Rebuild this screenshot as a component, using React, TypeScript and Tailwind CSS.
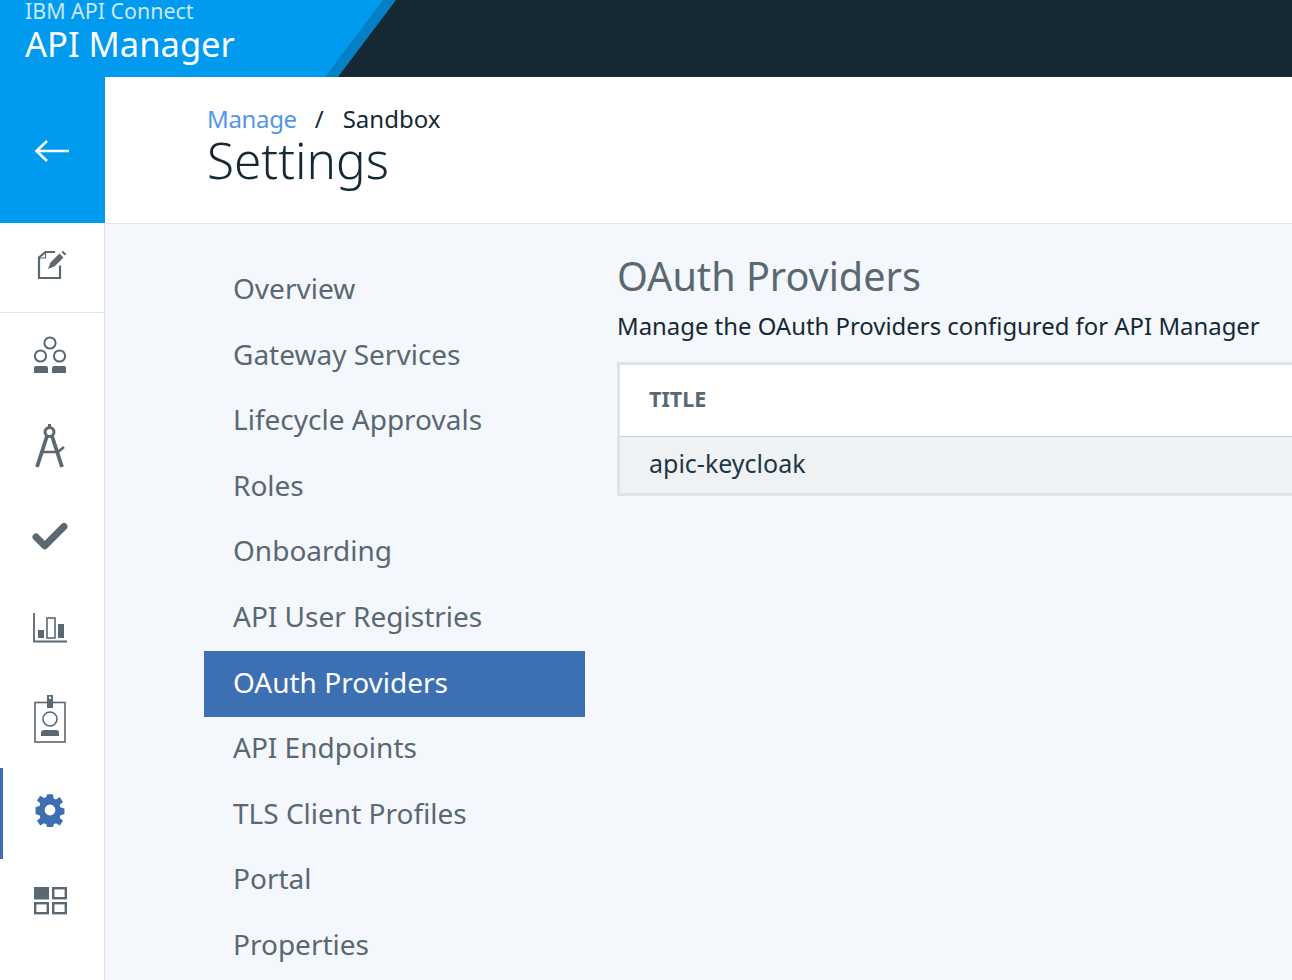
import { Check } from "lucide-react";

const NAV = [
  "Overview",
  "Gateway Services",
  "Lifecycle Approvals",
  "Roles",
  "Onboarding",
  "API User Registries",
  "OAuth Providers",
  "API Endpoints",
  "TLS Client Profiles",
  "Portal",
  "Properties",
];

function BackArrow() {
  return (
    <svg width="36" height="24" viewBox="0 0 36 24" fill="none">
      <path d="M35 12H3M13 2L2.5 12 13 22" stroke="#ffffff" strokeWidth="2.6" />
    </svg>
  );
}

function DraftIcon() {
  return (
    <svg width="32" height="32" viewBox="0 0 32 32" fill="none">
      <path d="M24 16.5V29H3V8.5L9.5 3H19" stroke="#5a6872" strokeWidth="2.2" />
      <path d="M9.5 3v6H3.5" stroke="#5a6872" strokeWidth="1.2" />
      <path d="M12 20l2.5-6.5 9-9 4 4-9 9z" fill="#5a6872" />
      <path d="M25.5 3.2l1.4-1.4 3.4 3.2-1.4 1.5z" fill="#5a6872" />
    </svg>
  );
}

function CommunityIcon() {
  return (
    <svg width="34" height="38" viewBox="0 0 34 38" fill="none">
      <circle cx="17" cy="7" r="5.6" stroke="#5a6872" strokeWidth="2" />
      <circle cx="7.5" cy="20" r="5.6" stroke="#5a6872" strokeWidth="2" />
      <circle cx="26.5" cy="20" r="5.6" stroke="#5a6872" strokeWidth="2" />
      <path d="M1 37v-5q0-2 2-2h10q2 0 2 2v5zM19 37v-5q0-2 2-2h10q2 0 2 2v5z" fill="#5a6872" />
    </svg>
  );
}

function CompassIcon() {
  return (
    <svg width="32" height="46" viewBox="0 0 32 46" fill="none">
      <path d="M14 1h3v4h-3z" fill="#5a6872" />
      <circle cx="15.5" cy="9" r="4.5" stroke="#5a6872" strokeWidth="3" />
      <path d="M13 13L3 44M18 13l10 31" stroke="#5a6872" strokeWidth="3.8" />
      <path d="M7 29h17l6-5" stroke="#5a6872" strokeWidth="2.6" />
    </svg>
  );
}

function ChartIcon() {
  return (
    <svg width="34" height="30" viewBox="0 0 34 30" fill="none">
      <path d="M1 0v28.5h33" stroke="#5a6872" strokeWidth="1.8" />
      <rect x="5" y="17" width="6" height="8" fill="#5a6872" />
      <rect x="14" y="5" width="8" height="20" stroke="#5a6872" strokeWidth="1.6" />
      <rect x="25" y="11" width="6" height="14" fill="#5a6872" />
    </svg>
  );
}

function BadgeIcon() {
  return (
    <svg width="32" height="48" viewBox="0 0 32 48" fill="none">
      <rect x="1" y="7.5" width="30" height="39.5" stroke="#5a6872" strokeWidth="1.6" />
      <rect x="13" y="0" width="6" height="13" fill="#5a6872" />
      <circle cx="16" cy="2.8" r="1.2" fill="#ffffff" />
      <circle cx="16" cy="24" r="7" stroke="#5a6872" strokeWidth="1.6" />
      <path d="M7 41v-3q0-3 3-3h12q3 0 3 3v3z" fill="#5a6872" />
    </svg>
  );
}

function GearIcon() {
  return (
    <svg width="34" height="34" viewBox="0 0 24 24">
      <path
        fillRule="evenodd"
        d="M10 .8h4l.6 3.1 1.6.7 2.7-1.7 2.3 3.4-2.3 2 .3 1.7 3 1v3.9l-3 1-.3 1.7 2.3 2-2.3 3.4-2.7-1.7-1.6.7-.6 3.1h-4l-.6-3.1-1.6-.7-2.7 1.7-2.3-3.4 2.3-2-.3-1.7-3-1V10l3-1 .3-1.7-2.3-2 2.3-3.4 2.7 1.7 1.6-.7zM12 8.2a3.8 3.8 0 1 0 0 7.6 3.8 3.8 0 0 0 0-7.6z"
        fill="#3d70b2"
      />
    </svg>
  );
}

function GridIcon() {
  return (
    <svg width="33" height="28" viewBox="0 0 33 28">
      <rect x="0" y="0" width="15" height="12.5" fill="#5a6872" />
      <rect x="19.2" y="1.2" width="12.6" height="10" fill="none" stroke="#5a6872" strokeWidth="2.4" />
      <rect x="1.2" y="16.2" width="12.6" height="10" fill="none" stroke="#5a6872" strokeWidth="2.4" />
      <rect x="19.2" y="16.2" width="12.6" height="10" fill="none" stroke="#5a6872" strokeWidth="2.4" />
    </svg>
  );
}

function RailItem({ children, active }: { children: React.ReactNode; active?: boolean }) {
  return (
    <div
      className={
        active
          ? "flex h-[91px] items-center justify-center border-l-[3px] border-[#3d70b2] pr-[7px] pb-[7px]"
          : "flex h-[91px] items-center justify-center pr-[4px] pb-[7px]"
      }
    >
      {children}
    </div>
  );
}

export default function App() {
  return (
    <div
      className="flex h-[980px] w-[1292px] flex-col overflow-hidden bg-[#f4f7fb]"
      style={{ fontFamily: '"Noto Sans", "Open Sans", sans-serif' }}
    >
      {/* top bar */}
      <header className="flex h-[77px] shrink-0 bg-[#152935]">
        <div className="h-full w-[325px] overflow-hidden bg-[#009bef] pl-[25px] text-white">
          <div className="h-[22px] text-[21.4px] leading-[22px] text-[#c8e8fb]">IBM API Connect</div>
          <div className="text-[34.5px] leading-[44px]">API Manager</div>
        </div>
        <svg width="71" height="77" viewBox="0 0 71 77" className="shrink-0">
          <polygon points="0,0 71,0 13,77 0,77" fill="#0580c4" />
          <polygon points="0,0 58,0 0,77" fill="#009bef" />
        </svg>
      </header>

      <div className="flex min-h-0 flex-1">
        {/* left rail */}
        <aside className="flex w-[105px] shrink-0 flex-col">
          <div className="flex h-[146px] shrink-0 items-center justify-center bg-[#009bef] pr-[1px] pt-[2px]">
            <BackArrow />
          </div>
          <div className="flex-1 border-r border-[#dfe3e6] bg-white">
            <div className="flex h-[90px] items-center justify-center border-b border-[#dfe3e6] pb-[6px]">
              <DraftIcon />
            </div>
            <RailItem>
              <CommunityIcon />
            </RailItem>
            <RailItem>
              <CompassIcon />
            </RailItem>
            <RailItem>
              <Check size={42} strokeWidth={4} color="#5a6872" />
            </RailItem>
            <RailItem>
              <ChartIcon />
            </RailItem>
            <RailItem>
              <BadgeIcon />
            </RailItem>
            <RailItem active>
              <GearIcon />
            </RailItem>
            <RailItem>
              <GridIcon />
            </RailItem>
          </div>
        </aside>

        <main className="flex min-w-0 flex-1 flex-col">
          <div className="h-[147px] shrink-0 border-b border-[#dfe3e6] bg-white pl-[102px] pt-[27px]">
            <div className="flex h-[30px] text-[24px] leading-[30px]">
              <span className="tracking-[-0.35px] text-[#5596e6]">Manage</span>
              <span className="ml-[18px] text-[#152935]">/</span>
              <span className="ml-[19px] text-[#152935]">Sandbox</span>
            </div>
            <h1 className="text-[49.5px] leading-[52px] font-light text-[#152935]">Settings</h1>
          </div>

          <div className="flex min-h-0 flex-1">
            <nav className="ml-[99px] mt-[33.6px] w-[381px] shrink-0">
              {NAV.map((item) => (
                <div
                  key={item}
                  className={
                    item === "OAuth Providers"
                      ? "flex h-[66px] items-center bg-[#3d70b2] pb-[4px] pl-[29px] text-[28px] text-white"
                      : "flex h-[65.5px] items-center pb-[4px] pl-[29px] text-[28px] text-[#5a6872]"
                  }
                >
                  {item}
                </div>
              ))}
            </nav>

            <section className="ml-[32px] min-w-0 flex-1 pt-[26px]">
              <h2 className="text-[39.6px] leading-[52px] text-[#5a6872]">OAuth Providers</h2>
              <p className="mt-[8px] text-[23.9px] leading-[32px] whitespace-nowrap text-[#152935]">
                Manage the OAuth Providers configured for API Manager
              </p>
              <div className="mt-[20px] border-y-[3px] border-l-[3px] border-[#dfe3e6]">
                <div className="flex h-[72px] items-center border-b border-[#c7ccd0] bg-white pb-[3px] pl-[29px] text-[21.5px] font-bold text-[#5a6872]">
                  TITLE
                </div>
                <div className="flex h-[56px] items-center bg-[#eff2f5] pb-[3px] pl-[29px] text-[25px] text-[#1f3543]">
                  apic-keycloak
                </div>
              </div>
            </section>
          </div>
        </main>
      </div>
    </div>
  );
}
